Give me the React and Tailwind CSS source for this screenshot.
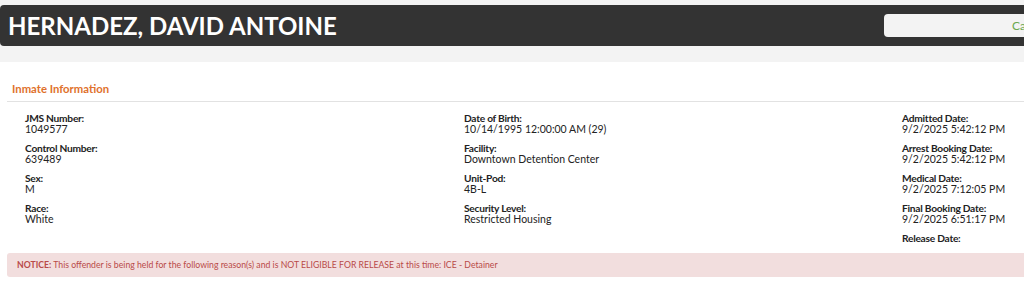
export default function App() {
  const col1 = [
    ["JMS Number:", "1049577"],
    ["Control Number:", "639489"],
    ["Sex:", "M"],
    ["Race:", "White"],
  ];
  const col2 = [
    ["Date of Birth:", "10/14/1995 12:00:00 AM (29)"],
    ["Facility:", "Downtown Detention Center"],
    ["Unit-Pod:", "4B-L"],
    ["Security Level:", "Restricted Housing"],
  ];
  const col3 = [
    ["Admitted Date:", "9/2/2025 5:42:12 PM"],
    ["Arrest Booking Date:", "9/2/2025 5:42:12 PM"],
    ["Medical Date:", "9/2/2025 7:12:05 PM"],
    ["Final Booking Date:", "9/2/2025 6:51:17 PM"],
    ["Release Date:", ""],
  ];
  const Col = ({ items }) => (
    <div className="flex flex-col gap-[8px]">
      {items.map(([l, v]) => (
        <div key={l} className="flex flex-col">
          <div className="font-bold text-[10.2px] tracking-[-0.25px] leading-[11px] text-[#222]">{l}</div>
          {v && <div className="text-[10.5px] leading-[11px] text-[#222]">{v}</div>}
        </div>
      ))}
    </div>
  );
  return (
    <div className="w-[1024px] h-[284px] overflow-hidden bg-white" style={{ fontFamily: "Lato, 'Open Sans', sans-serif" }}>
      <div className="w-[1400px]">
        <div className="bg-[#f3f3f3] h-[62px] pt-[5px]">
          <div className="h-[41px] bg-[#333333] rounded-l-[4px] flex items-center">
            <h1 className="pl-[8px] text-white font-bold text-[24px] leading-none w-[884px]">HERNADEZ, DAVID ANTOINE</h1>
            <div className="h-[23px] w-[300px] bg-[#f3f3f3] rounded-[4px] flex items-center pl-[128px] text-[12px] text-[#6aa84f]">
              Case Search
            </div>
          </div>
        </div>
        <div className="pl-[7px]">
          <div className="h-[40px] pt-[20px] border-b border-[#e2e2e2] pl-[5px]">
            <div className="text-[#e0712c] font-bold text-[11.3px] leading-[14px]">Inmate Information</div>
          </div>
          <div className="grid grid-cols-[439px_438px_439px] pl-[18px] pt-[11px] h-[151px]">
            <Col items={col1} />
            <Col items={col2} />
            <Col items={col3} />
          </div>
          <div className="h-[24px] bg-[#f2dede] rounded-[3px] flex items-center pl-[10px] text-[8.7px] text-[#b94a48]">
            <span className="font-bold">NOTICE:</span>
            <span>&nbsp;This offender is being held for the following reason(s) and is NOT ELIGIBLE FOR RELEASE at this time: ICE - Detainer</span>
          </div>
        </div>
      </div>
    </div>
  );
}
